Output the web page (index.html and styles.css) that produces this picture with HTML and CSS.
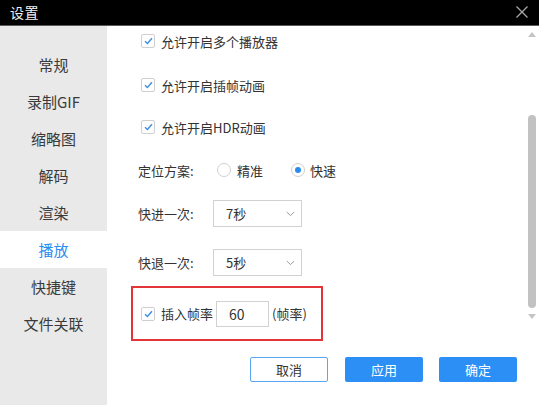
FILE: index.html
```html
<!DOCTYPE html>
<html lang="zh-CN">
<head>
<meta charset="utf-8">
<title>设置</title>
<link rel="stylesheet" href="styles.css">
</head>
<body>
<div class="window">
  <div class="titlebar">
    <span class="title">设置</span>
    <svg class="close" width="12" height="12" viewBox="0 0 12 12"><path d="M0.5 0.5 L11.5 11.5 M11.5 0.5 L0.5 11.5" stroke="#a8a8a8" stroke-width="1.3" fill="none"/></svg>
  </div>
  <div class="main">
    <div class="sidebar">
      <div class="nav">常规</div>
      <div class="nav">录制GIF</div>
      <div class="nav">缩略图</div>
      <div class="nav">解码</div>
      <div class="nav">渲染</div>
      <div class="nav active">播放</div>
      <div class="nav">快捷键</div>
      <div class="nav">文件关联</div>
    </div>
    <div class="content">
      <div class="form">
        <div class="row check-row r1"><span class="cb"><svg width="9" height="8" viewBox="0 0 9 8"><path d="M1 4.2 L3.4 6.5 L8 1.2" stroke="#3b8fe8" stroke-width="1.4" fill="none"/></svg></span><span>允许开启多个播放器</span></div>
        <div class="row check-row r2"><span class="cb"><svg width="9" height="8" viewBox="0 0 9 8"><path d="M1 4.2 L3.4 6.5 L8 1.2" stroke="#3b8fe8" stroke-width="1.4" fill="none"/></svg></span><span>允许开启插帧动画</span></div>
        <div class="row check-row r3"><span class="cb"><svg width="9" height="8" viewBox="0 0 9 8"><path d="M1 4.2 L3.4 6.5 L8 1.2" stroke="#3b8fe8" stroke-width="1.4" fill="none"/></svg></span><span>允许开启HDR动画</span></div>
        <div class="row label-row r4">
          <span class="lbl lbl-radio">定位方案:</span>
          <span class="radio"></span><span class="opt">精准</span>
          <span class="radio on"></span><span class="opt2">快速</span>
        </div>
        <div class="row label-row r5">
          <span class="lbl lbl-sel">快进一次:</span>
          <div class="select"><span>7秒</span><svg width="9" height="6" viewBox="0 0 9 6"><path d="M0.8 1 L4.5 4.6 L8.2 1" stroke="#9a9a9a" stroke-width="1" fill="none"/></svg></div>
        </div>
        <div class="row label-row r6">
          <span class="lbl lbl-sel">快退一次:</span>
          <div class="select"><span>5秒</span><svg width="9" height="6" viewBox="0 0 9 6"><path d="M0.8 1 L4.5 4.6 L8.2 1" stroke="#9a9a9a" stroke-width="1" fill="none"/></svg></div>
        </div>
        <div class="highlight">
          <span class="cb"><svg width="9" height="8" viewBox="0 0 9 8"><path d="M1 4.2 L3.4 6.5 L8 1.2" stroke="#3b8fe8" stroke-width="1.4" fill="none"/></svg></span>
          <span>插入帧率</span>
          <div class="num">60</div>
          <span class="unit">(帧率)</span>
        </div>
        <div class="buttons">
          <div class="btn ghost">取消</div>
          <div class="btn primary">应用</div>
          <div class="btn primary">确定</div>
        </div>
      </div>
      <div class="scrollbar">
        <span class="arrow up"></span>
        <span class="thumb"></span>
        <span class="arrow down"></span>
      </div>
    </div>
  </div>
</div>
</body>
</html>
```
FILE: styles.css
```css
* { box-sizing: border-box; }
html, body { margin: 0; padding: 0; }
body {
  width: 539px;
  height: 405px;
  overflow: hidden;
  font-family: "Noto Sans CJK SC", "Noto Sans", sans-serif;
  color: #333;
  background: #fff;
}
.window { width: 539px; height: 405px; display: flex; flex-direction: column; }
.titlebar {
  height: 26px;
  background: #000;
  border-bottom: 1px solid #5a5a5a;
  display: flex;
  align-items: center;
  justify-content: space-between;
  padding: 0 11px 2px 10px;
  flex: none;
}
.title { color: #f2f2f2; font-size: 14px; line-height: 1; letter-spacing: 0.5px; }
.close { display: block; }
.main { flex: 1; display: flex; min-height: 0; }
.sidebar {
  width: 107px;
  background: #e9e9e9;
  padding-top: 20px;
  flex: none;
}
.nav {
  height: 37px;
  display: flex;
  align-items: center;
  justify-content: center;
  font-size: 15px;
  color: #3a3a3a;
}
.nav.active { background: #fff; color: #2b8cf0; }
.content { flex: 1; display: flex; }
.form { flex: 1; padding-left: 24px; padding-top: 5px; font-size: 13px; color: #333; }
.row { display: flex; align-items: center; }
.check-row { height: 20px; padding-left: 10px; }
.label-row { padding-left: 7px; }
.r2 { margin-top: 24px; }
.r3 { margin-top: 22px; }
.r4 { margin-top: 23px; height: 20px; }
.r5 { margin-top: 20px; height: 27px; }
.r6 { margin-top: 22px; height: 27px; }
.cb {
  width: 14px; height: 14px;
  border: 1px solid #cfcfcf;
  border-radius: 2px;
  background: #fff;
  display: inline-flex;
  align-items: center;
  justify-content: center;
  margin-right: 6px;
  flex: none;
}
.lbl-radio { width: 79px; }
.lbl-sel { width: 75px; }
.radio {
  width: 14px; height: 14px;
  border: 1px solid #cfcfcf;
  border-radius: 50%;
  background: #fff;
  display: inline-flex;
  align-items: center;
  justify-content: center;
  margin-right: 6px;
  flex: none;
}
.radio.on::after {
  content: "";
  width: 6px; height: 6px;
  border-radius: 50%;
  background: #2b8cf0;
}
.opt { width: 54px; }
.opt2 { margin-left: -1px; }
.select {
  width: 89px; height: 27px;
  border: 1px solid #d2d2d2;
  display: flex;
  align-items: center;
  justify-content: space-between;
  padding: 0 6px 0 12px;
}
.select svg { display: block; }
.highlight {
  margin-top: 10px;
  width: 192px; height: 55px;
  border: 2px solid #e3343a;
  display: flex;
  align-items: center;
  padding-left: 8px;
}
.num {
  width: 53px; height: 26px;
  border: 1px solid #d2d2d2;
  margin-left: 3px;
  display: flex;
  align-items: center;
  padding-left: 12px;
  font-size: 14px;
}
.unit { margin-left: 3px; }
.buttons {
  margin-top: 16px;
  display: flex;
  justify-content: flex-end;
  gap: 16px;
  padding-right: 10px;
}
.btn {
  width: 78px; height: 25px;
  border-radius: 2px;
  display: flex;
  align-items: center;
  justify-content: center;
  font-size: 13px;
}
.btn.ghost { border: 1px solid #5ba6f3; color: #333; background: #fff; margin-right: 1px; }
.btn.primary { background: #2b8ff5; color: #fff; }
.scrollbar {
  width: 12px;
  display: flex;
  flex-direction: column;
  align-items: center;
  padding-top: 6px;
  flex: none;
  padding-right: 2px;
}
.arrow { width: 0; height: 0; border-left: 4px solid transparent; border-right: 4px solid transparent; }
.arrow.up { border-bottom: 5px solid #c4c4c4; }
.arrow.down { border-top: 5px solid #c4c4c4; margin-top: 6px; }
.thumb { width: 8px; height: 193px; border-radius: 4px; background: #c2c2c2; margin-top: 78px; }
```
